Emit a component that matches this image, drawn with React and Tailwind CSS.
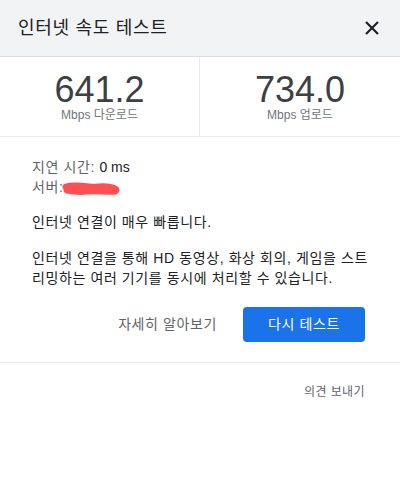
export default function App() {
  return (
    <div className="w-[400px] h-[500px] bg-white font-['Liberation_Sans','Noto_Sans_CJK_KR',sans-serif] text-[#202124]">
      <div className="h-[57px] bg-[#f1f3f4] border-b border-[#dadce0] flex items-center justify-between pl-[18px] pr-[20px]">
        <h1 className="text-[18px] text-[#202124] tracking-[0.7px]">인터넷 속도 테스트</h1>
        <button className="w-[16px] h-[16px] flex items-center justify-center">
          <svg width="16" height="16" viewBox="0 0 16 16">
            <path d="M2 2L14 14M14 2L2 14" stroke="#202124" strokeWidth="2.2" />
          </svg>
        </button>
      </div>

      <div className="grid grid-cols-2 border-b border-[#e8eaed]">
        <div className="flex flex-col items-center pt-[15px] pb-[14px] border-r border-[#e8eaed]">
          <div className="text-[36px] leading-[35px] text-[#3c4043]">641.2</div>
          <div className="text-[12px] leading-[14px] mt-[1px] text-[#70757a]">Mbps 다운로드</div>
        </div>
        <div className="flex flex-col items-center pt-[15px] pb-[14px]">
          <div className="text-[36px] leading-[35px] text-[#3c4043]">734.0</div>
          <div className="text-[12px] leading-[14px] mt-[1px] text-[#70757a]">Mbps 업로드</div>
        </div>
      </div>

      <div className="px-[32px] pt-[20px] text-[14px] leading-[20px] tracking-[0.6px]">
        <div>
          <span className="text-[#5f6368]">지연 시간: </span>
          <span className="text-[#202124] tracking-normal">0 ms</span>
        </div>
        <div className="relative text-[#5f6368]">
          서버:
          <svg className="absolute left-[29px] top-[2px]" width="62" height="18" viewBox="0 0 62 18">
            <path
              d="M5 8C12 6 20 7 28 8C36 9 44 6 52 9C55 10 56 11 54 12C46 13 36 11 26 12C18 13 11 12 6 11"
              stroke="#ff4f55"
              strokeWidth="7"
              strokeLinecap="round"
              strokeLinejoin="round"
              fill="none"
            />
          </svg>
        </div>
        <p className="mt-[15px]">인터넷 연결이 매우 빠릅니다.</p>
        <p className="mt-[16px]">
          인터넷 연결을 통해 HD 동영상, 화상 회의, 게임을 스트리밍하는 여러 기기를 동시에 처리할 수 있습니다.
        </p>
      </div>

      <div className="flex items-center justify-end gap-[10px] pr-[35px] pt-[19px] pb-[20px] border-b border-[#e8eaed]">
        <button className="px-[16px] h-[35px] text-[14px] tracking-[0.6px] text-[#5f6368]">자세히 알아보기</button>
        <button className="w-[122px] h-[35px] rounded-[4px] bg-[#1a73e8] text-white text-[14px] tracking-[0.6px]">다시 테스트</button>
      </div>

      <div className="flex justify-end pr-[35px] pt-[20px]">
        <span className="text-[12px] tracking-[0.4px] text-[#5f6368]">의견 보내기</span>
      </div>
    </div>
  );
}
